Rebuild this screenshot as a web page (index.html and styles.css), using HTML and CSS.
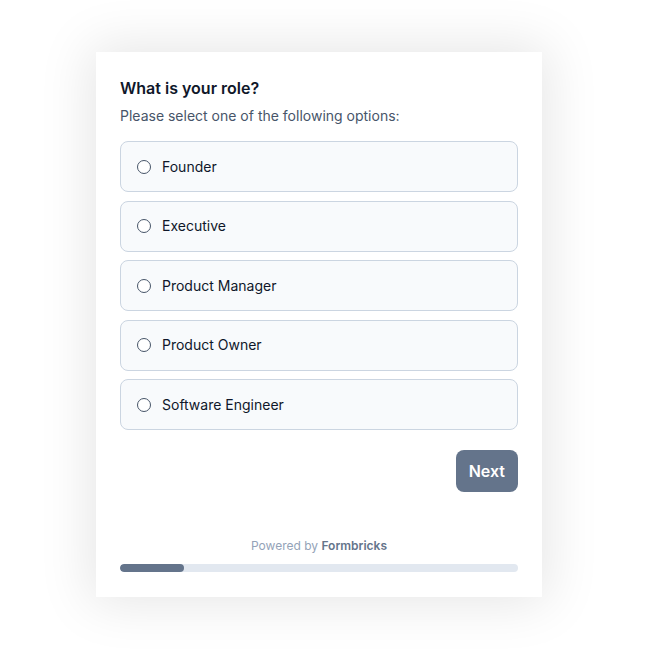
FILE: index.html
```html
<!DOCTYPE html>
<html lang="en">
<head>
<meta charset="utf-8">
<title>Survey</title>
<link rel="stylesheet" href="styles.css">
</head>
<body>
<div class="card">
  <h1 class="title">What is your role?</h1>
  <p class="subtitle">Please select one of the following options:</p>
  <div class="options">
    <label class="option"><span class="radio"></span><span class="label">Founder</span></label>
    <label class="option"><span class="radio"></span><span class="label">Executive</span></label>
    <label class="option"><span class="radio"></span><span class="label">Product Manager</span></label>
    <label class="option"><span class="radio"></span><span class="label">Product Owner</span></label>
    <label class="option"><span class="radio"></span><span class="label">Software Engineer</span></label>
  </div>
  <div class="actions">
    <button class="next">Next</button>
  </div>
  <div class="footer">
    <p class="powered">Powered by <strong>Formbricks</strong></p>
    <div class="progress"><div class="progress-fill" style="width:64px"></div></div>
  </div>
</div>
</body>
</html>
```
FILE: styles.css
```css
* { box-sizing: border-box; }
html, body { margin: 0; padding: 0; background: #fff; }
body {
  font-family: Inter, "Noto Sans", "Liberation Sans", sans-serif;
  color: #0f172a;
  padding-top: 52px;
  height: 652px;
  overflow: hidden;
}
.card {
  width: 446px;
  height: 545px;
  margin-left: 96px;
  background: #fff;
  padding: 24px 24px 25px;
  box-shadow: 0 0 50px 6px rgba(0, 0, 0, 0.1);
  display: flex;
  flex-direction: column;
}
.title {
  margin: 0;
  font-size: 16px;
  line-height: 24px;
  font-weight: 600;
  color: #0f172a;
}
.subtitle {
  margin: 6px 0 0;
  font-size: 14px;
  line-height: 20px;
  color: #475569;
}
.options {
  margin-top: 15px;
  display: flex;
  flex-direction: column;
  gap: 8.5px;
}
.option {
  display: flex;
  align-items: center;
  gap: 11px;
  height: 51px;
  padding: 0 16px;
  border: 1px solid #cbd5e1;
  border-radius: 8px;
  background: #f8fafc;
  font-size: 14px;
  line-height: 20px;
  color: #0f172a;
}
.radio {
  width: 14px;
  height: 14px;
  border: 1px solid #475569;
  border-radius: 50%;
  background: #fff;
  flex: none;
}
.actions {
  margin-top: 20px;
  display: flex;
  justify-content: flex-end;
}
.next {
  font-family: inherit;
  font-size: 16px;
  line-height: 24px;
  font-weight: 600;
  color: #fff;
  background: #64748b;
  border: none;
  border-radius: 8px;
  padding: 9px 13px;
  height: 42px;
}
.footer {
  margin-top: auto;
}
.powered {
  margin: 0;
  text-align: center;
  font-size: 12px;
  line-height: 16px;
  color: #94a3b8;
}
.powered strong {
  color: #64748b;
  font-weight: 600;
}
.progress {
  margin-top: 10px;
  height: 8px;
  border-radius: 9999px;
  background: #e2e8f0;
  overflow: hidden;
}
.progress-fill {
  height: 100%;
  border-radius: 9999px;
  background: #64748b;
}
```
